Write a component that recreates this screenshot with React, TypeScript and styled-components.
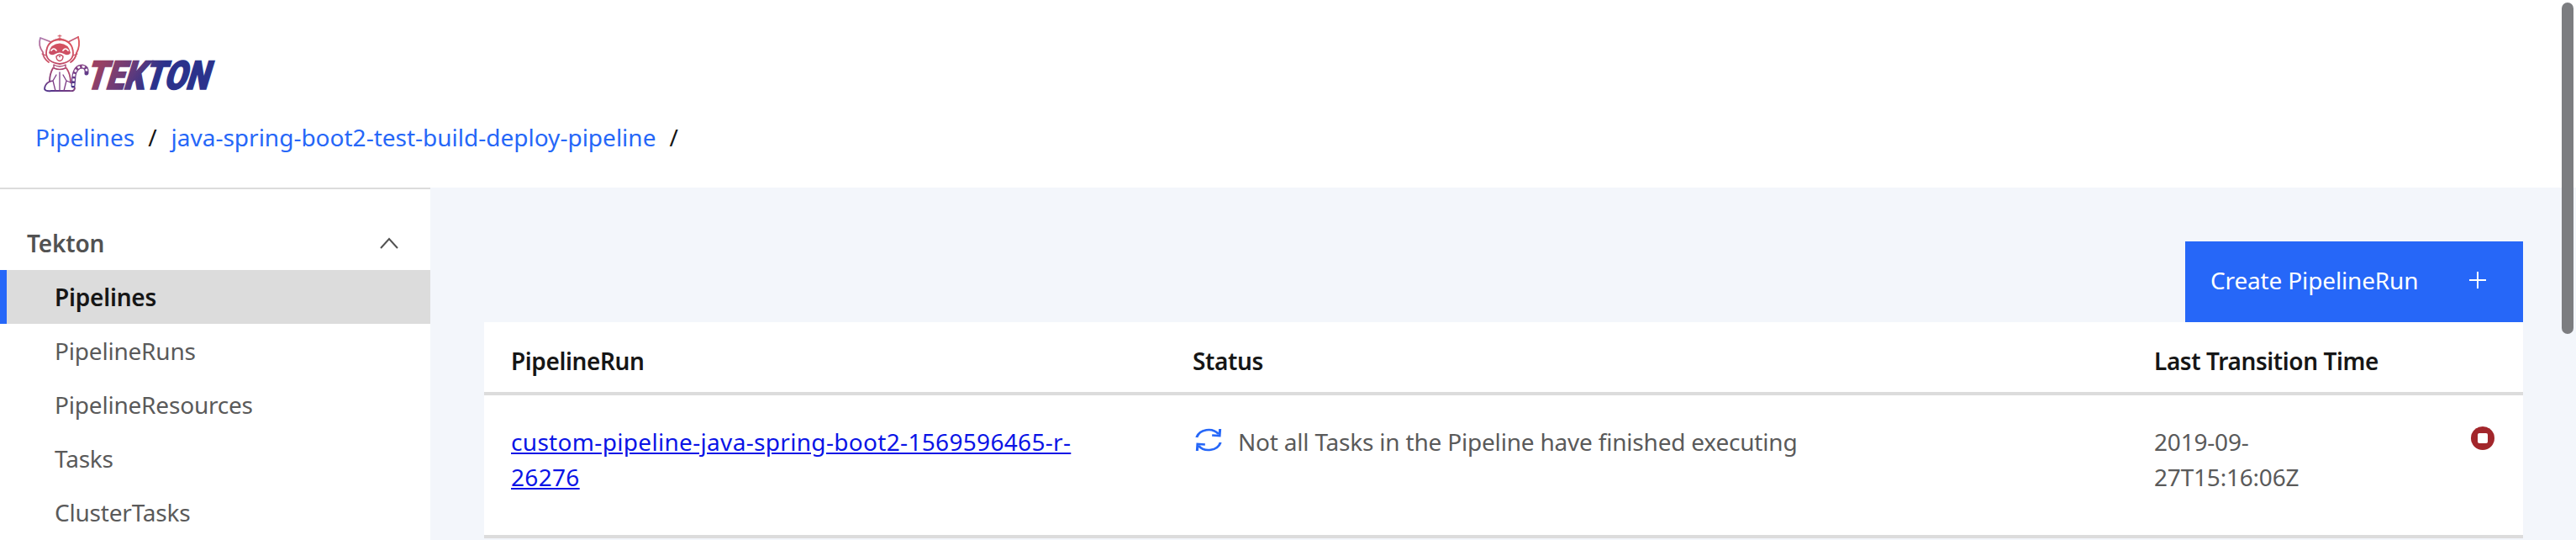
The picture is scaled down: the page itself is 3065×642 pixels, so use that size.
import React from "react";
import styled, { createGlobalStyle } from "styled-components";

const Global = createGlobalStyle`
  html, body { margin: 0; padding: 0; height: 642px; overflow: hidden; background: #fff; }
  * { box-sizing: border-box; }
  body { font-family: "Noto Sans", "Liberation Sans", sans-serif; }
`;

const Page = styled.div`
  width: 3065px;
  height: 642px;
  display: flex;
  flex-direction: column;
  position: relative;
  overflow: hidden;
`;

const Header = styled.header`
  height: 223px;
  padding: 30px 0 0 42px;
  background: #fff;
`;

const LogoSvg = styled.svg`
  display: block;
  width: 240px;
  height: 92px;
  margin-left: -2px;
`;

const LogoWord = styled.text`
  font-family: Roboto, "Liberation Sans", sans-serif;
  font-weight: 900;
  font-size: 47px;
`;

const Crumbs = styled.nav`
  margin-top: 21px;
  display: flex;
  align-items: center;
  height: 40px;
  font-size: 28px;
  color: #161616;
`;

const CrumbLink = styled.a`
  color: #2667f8;
  text-decoration: none;
`;

const Slash = styled.span`
  margin: 0 17px 0 16px;
`;

const Body = styled.div`
  flex: 1;
  display: flex;
  min-height: 0;
`;

const Sidebar = styled.aside`
  width: 512px;
  flex: none;
  border-top: 2px solid #dcdcdc;
  background: #fff;
  padding-top: 40px;
`;

const NavHead = styled.div`
  height: 56px;
  display: flex;
  align-items: center;
  justify-content: space-between;
  padding: 0 38px 8px 32px;
  font-size: 28px;
  font-weight: 600;
  letter-spacing: -0.2px;
  color: #525252;
`;

const NavItem = styled.a<{ $active?: boolean }>`
  display: flex;
  align-items: center;
  height: 64px;
  padding-left: ${(p) => (p.$active ? 57 : 65)}px;
  font-size: 28px;
  letter-spacing: -0.2px;
  font-weight: ${(p) => (p.$active ? 600 : 400)};
  color: ${(p) => (p.$active ? "#161616" : "#5a5a5a")};
  background: ${(p) => (p.$active ? "#dcdcdc" : "transparent")};
  border-left: ${(p) => (p.$active ? "8px solid #2667f8" : "none")};
`;

const Main = styled.main`
  flex: 1;
  background: #f3f6fb;
  padding: 64px 63px 0 64px;
  min-width: 0;
`;

const Actions = styled.div`
  display: flex;
  justify-content: flex-end;
`;

const CreateButton = styled.button`
  width: 402px;
  height: 96px;
  border: 0;
  padding: 0 44px 4px 30px;
  background: #2667f8;
  color: #fff;
  font: inherit;
  font-size: 28px;
  letter-spacing: -0.15px;
  display: flex;
  align-items: center;
  justify-content: space-between;
`;

const PlusIcon = styled.svg`
  width: 20px;
  height: 20px;
  stroke: #fff;
  stroke-width: 2;
`;

const Table = styled.table`
  width: 100%;
  border-collapse: collapse;
  background: #fff;
  table-layout: fixed;
`;

const Th = styled.th<{ $w?: number }>`
  width: ${(p) => (p.$w ? `${p.$w}px` : "auto")};
  height: 85px;
  padding: 8px 32px 0;
  text-align: left;
  font-size: 28px;
  font-weight: 600;
  letter-spacing: -0.4px;
  color: #161616;
  border-bottom: 4px solid #dcdcdc;
`;

const Td = styled.td`
  height: 170px;
  padding: 34px 32px 0;
  vertical-align: top;
  font-size: 28px;
  line-height: 42px;
  letter-spacing: -0.2px;
  color: #5a5a5a;
  border-bottom: 4px solid #dcdcdc;
`;

const RunLink = styled.a`
  color: #0a14e6;
  text-decoration: underline;
  letter-spacing: 0.32px;
`;

const StatusCell = styled.div`
  display: flex;
  align-items: flex-start;
  gap: 19px;
`;

const StatusIcon = styled.svg`
  width: 32px;
  height: 28px;
  flex: none;
  margin: 5px 0 0 3px;
`;

const StopIcon = styled.svg`
  width: 28px;
  height: 28px;
  display: block;
  margin-top: 3px;
`;

const ScrollThumb = styled.div`
  position: absolute;
  right: 3px;
  top: 3px;
  width: 14px;
  height: 394px;
  border-radius: 7px;
  background: #7c7d80;
`;

const Logo = () => (
  <LogoSvg viewBox="0 -6 240 92" fill="none">
    <defs>
      <linearGradient id="catG" gradientUnits="userSpaceOnUse" x1="52" y1="10" x2="26" y2="74">
        <stop offset="0" stopColor="#e0575c" />
        <stop offset="0.55" stopColor="#c04a68" />
        <stop offset="1" stopColor="#56378c" />
      </linearGradient>
      <linearGradient id="earG" gradientUnits="userSpaceOnUse" x1="6" y1="8" x2="22" y2="34">
        <stop offset="0" stopColor="#a77bb4" />
        <stop offset="1" stopColor="#cf5263" />
      </linearGradient>
      <linearGradient id="tailG" gradientUnits="userSpaceOnUse" x1="48" y1="44" x2="60" y2="70">
        <stop offset="0" stopColor="#8a4184" />
        <stop offset="1" stopColor="#32348f" />
      </linearGradient>
      <linearGradient id="wordG" gradientUnits="userSpaceOnUse" x1="8" y1="-30" x2="76" y2="-4">
        <stop offset="0" stopColor="#9a4063" />
        <stop offset="0.5" stopColor="#6c3c78" />
        <stop offset="1" stopColor="#2b328c" />
      </linearGradient>
    </defs>
    <g strokeLinecap="round" strokeLinejoin="round">
      <path d="M53 8 L41 14 Q31 7 21 14 L8 9 Q5 18 11 26 Q11 33 18 38" stroke="url(#earG)" strokeWidth="1.8" />
      <path d="M53 8 Q56 18 51 27 Q50 34 44 38" stroke="url(#catG)" strokeWidth="1.8" />
      <path d="M15 28 Q15 12 31 11 Q47 12 47 28 Q46 38 31 40 Q16 38 15 28Z" stroke="url(#catG)" strokeWidth="1.8" fill="#fff" />
      <path d="M18 27 Q20 16 31 15.5 Q42 16 44 27 Q41 31 36 28 Q31 25 26 28 Q21 31 18 27Z" fill="url(#catG)" />
      <path d="M21 24 Q24 20 27 24 M35 24 Q38 20 41 24" stroke="#fff" strokeWidth="1.7" />
      <path d="M27 31 Q31 27 35 31 Q35 36 31 36.5 Q27 36 27 31Z" stroke="#c84c62" strokeWidth="1.4" />
      <path d="M29.5 30.5 L32.5 30.5 L31 32.5Z" fill="#a63c54" />
      <path d="M29 6.8 L33 6.8 M29 10 L33 10 M31 5.5 L31 12" stroke="#d0525f" strokeWidth="1" />
      <path d="M15 30 L10 28 M47 30 L52 28" stroke="#c84c62" strokeWidth="1.2" />
      <path d="M24 41 Q31 45 38 41 L38 45 Q31 48 24 45Z" stroke="#a8436e" strokeWidth="1.4" />
      <path d="M23 45 Q19 52 19 61 Q13 64 13 70 Q15 73 21 72 L43 72 Q48 73 49 69 Q48 64 44 62 Q44 52 39 45" stroke="url(#catG)" strokeWidth="1.8" />
      <path d="M31 50 L31 72 M26 72 L23 60 L27 53 M36 72 L39 60 L35 53 M19 61 L23 60 M44 62 L39 60" stroke="#7c3b85" strokeWidth="1.3" />
      <path d="M47 66 L48 54 Q50 43 58 43 Q64 44 63 51" stroke="url(#tailG)" strokeWidth="5" />
      <path d="M47 66 L48 54 Q50 43 58 43 Q64 44 63 51" stroke="#fff" strokeWidth="2.6" strokeLinecap="butt" strokeDasharray="3 2.6" />
    </g>
    <g transform="translate(61 70) skewX(-17)">
      <LogoWord x="0" y="0" textLength="146" lengthAdjust="spacingAndGlyphs" fill="url(#wordG)" stroke="url(#wordG)" strokeWidth="1.7">
        TEKTON
      </LogoWord>
    </g>
  </LogoSvg>
);

export default function App() {
  return (
    <Page>
      <Global />
      <Header>
        <Logo />
        <Crumbs>
          <CrumbLink>Pipelines</CrumbLink>
          <Slash>/</Slash>
          <CrumbLink>java-spring-boot2-test-build-deploy-pipeline</CrumbLink>
          <Slash>/</Slash>
        </Crumbs>
      </Header>
      <Body>
        <Sidebar>
          <NavHead>
            Tekton
            <svg width="22" height="14" viewBox="0 0 22 14" fill="none">
              <path d="M1 13 L11 2 L21 13" stroke="#525252" strokeWidth="2" />
            </svg>
          </NavHead>
          <NavItem $active>Pipelines</NavItem>
          <NavItem>PipelineRuns</NavItem>
          <NavItem>PipelineResources</NavItem>
          <NavItem>Tasks</NavItem>
          <NavItem>ClusterTasks</NavItem>
        </Sidebar>
        <Main>
          <Actions>
            <CreateButton>
              Create PipelineRun
              <PlusIcon viewBox="0 0 20 20">
                <path d="M10 0V20M0 10H20" />
              </PlusIcon>
            </CreateButton>
          </Actions>
          <Table>
            <thead>
              <tr>
                <Th $w={811}>PipelineRun</Th>
                <Th $w={1144}>Status</Th>
                <Th>Last Transition Time</Th>
                <Th $w={94} />
              </tr>
            </thead>
            <tbody>
              <tr>
                <Td>
                  <RunLink>
                    custom-pipeline-java-spring-boot2-1569596465-r-
                    <br />
                    26276
                  </RunLink>
                </Td>
                <Td>
                  <StatusCell>
                    <StatusIcon viewBox="2.5 2 27 28" preserveAspectRatio="none" fill="none" stroke="#2667f8" strokeWidth="2.6">
                      <path d="M4 13 A12.5 12.5 0 0 1 26 9" />
                      <path d="M28 19 A12.5 12.5 0 0 1 6 23" />
                      <path d="M27.5 3 L27 11 L19.5 10.5" />
                      <path d="M4.5 29 L5 21 L12.5 21.5" />
                    </StatusIcon>
                    Not all Tasks in the Pipeline have finished executing
                  </StatusCell>
                </Td>
                <Td>
                  2019-09-
                  <br />
                  27T15:16:06Z
                </Td>
                <Td>
                  <StopIcon viewBox="0 0 28 28">
                    <circle cx="14" cy="14" r="14" fill="#a2262b" />
                    <rect x="8" y="8" width="12" height="12" rx="2" fill="#fff" />
                  </StopIcon>
                </Td>
              </tr>
            </tbody>
          </Table>
        </Main>
      </Body>
      <ScrollThumb />
    </Page>
  );
}
